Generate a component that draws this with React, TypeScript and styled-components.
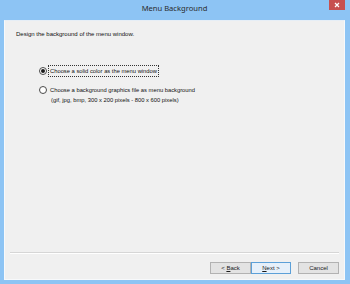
import React from "react";
import styled, { createGlobalStyle } from "styled-components";

const Global = createGlobalStyle`
  html, body { margin: 0; padding: 0; background: #8cc3f3; }
  * { box-sizing: border-box; }
`;

const Window = styled.div`
  width: 350px;
  height: 284px;
  background: #8dc4f4;
  display: flex;
  flex-direction: column;
  padding: 0 5px 4px 4px;
  font-family: "Liberation Sans", Arial, sans-serif;
  color: #111;
`;

const TitleBar = styled.div`
  height: 20px;
  display: grid;
  grid-template-columns: 1fr auto 1fr;
  grid-template-rows: 20px;
  align-items: start;
`;

const Title = styled.div`
  grid-column: 2;
  grid-row: 1;
  font-family: "Noto Sans", "Liberation Sans", sans-serif;
  font-size: 7.6px;
  line-height: 10px;
  margin-top: 3px;
  color: #2b2b2b;
`;

const Close = styled.div`
  grid-column: 3;
  grid-row: 1;
  justify-self: end;
  width: 16px;
  height: 10px;
  background: #c7504f;
  display: flex;
  align-items: center;
  justify-content: center;
`;

const Content = styled.div`
  flex: 1;
  background: #f0f0f0;
  border: 1px solid #f7f9fb;
  border-top-color: #e6eef6;
  display: flex;
  flex-direction: column;
  padding: 9px 0 5px 0;
`;

const Intro = styled.div`
  font-size: 6px;
  line-height: 9px;
  padding-left: 11px;
`;

const Options = styled.div`
  margin-top: 27px;
  padding-left: 34px;
  display: flex;
  flex-direction: column;
  gap: 8px;
`;

const Option = styled.div`
  display: flex;
  align-items: flex-start;
  gap: 1px;
`;

const Radio = styled.span<{ $checked?: boolean }>`
  width: 8px;
  height: 8px;
  margin-top: 1px;
  border-radius: 50%;
  border: 1px solid #4a4a4a;
  background: #ffffff;
  display: flex;
  align-items: center;
  justify-content: center;
  flex-shrink: 0;
  &::after {
    content: "";
    display: ${(p) => (p.$checked ? "block" : "none")};
    width: 4px;
    height: 4px;
    border-radius: 50%;
    background: #1a1a1a;
  }
`;

const Label = styled.div<{ $focused?: boolean }>`
  font-size: 5.8px;
  line-height: 10px;
  padding: 0 1px;
  border: 1px dotted ${(p) => (p.$focused ? "#333" : "transparent")};
  margin-top: -1px;
`;

const Sub = styled.div`
  margin-left: 1px;
`;

const Spacer = styled.div`
  flex: 1;
`;

const Separator = styled.div`
  margin: 0 5px 0 5px;
  height: 2px;
  border-top: 1px solid #d6d6d6;
  border-bottom: 1px solid #ffffff;
`;

const Footer = styled.div`
  display: flex;
  justify-content: flex-end;
  padding: 8px 5px 0 0;
`;

const Button = styled.div<{ $default?: boolean; $gap?: number }>`
  width: ${(p) => (p.$default ? 40 : 41)}px;
  height: 12px;
  margin-left: ${(p) => p.$gap ?? 0}px;
  border: 1px solid ${(p) => (p.$default ? "#5ca0d8" : "#b2b2b2")};
  background: ${(p) => (p.$default ? "#e6f0fa" : "#e3e3e3")};
  font-size: 6px;
  line-height: 10px;
  text-align: center;
  color: #1a1a1a;
  u { text-decoration: underline; }
`;

export default function App() {
  return (
    <>
      <Global />
      <Window>
        <TitleBar>
          <Title>Menu Background</Title>
          <Close>
            <svg width="6" height="6" viewBox="0 0 6 6">
              <path d="M1 1 L5 5 M5 1 L1 5" stroke="#fff" strokeWidth="1.2" />
            </svg>
          </Close>
        </TitleBar>
        <Content>
          <Intro>Design the background of the menu window.</Intro>
          <Options>
            <Option>
              <Radio $checked />
              <Label $focused>Choose a solid color as the menu window</Label>
            </Option>
            <Option>
              <Radio />
              <Label>
                Choose a background graphics file as menu background
                <Sub>(gif, jpg, bmp, 300 x 200 pixels - 800 x 600 pixels)</Sub>
              </Label>
            </Option>
          </Options>
          <Spacer />
          <Separator />
          <Footer>
            <Button>
              &lt; <u>B</u>ack
            </Button>
            <Button $default>
              <u>N</u>ext &gt;
            </Button>
            <Button $gap={7}>Cancel</Button>
          </Footer>
        </Content>
      </Window>
    </>
  );
}
